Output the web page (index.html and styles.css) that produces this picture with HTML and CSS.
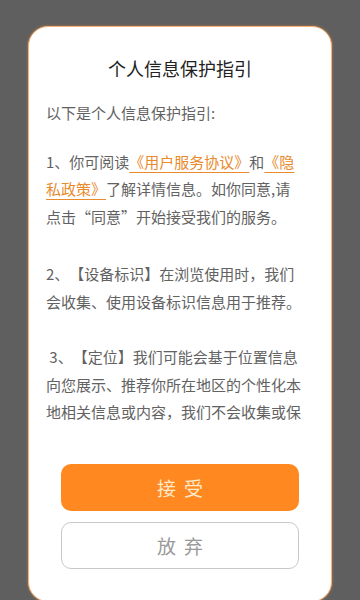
FILE: index.html
```html
<!DOCTYPE html>
<html lang="zh-CN">
<head>
    <meta charset="UTF-8">
    <meta name="viewport" content="width=device-width, initial-scale=1.0">
    <title>个人信息保护指引</title>
    <link rel="stylesheet" href="styles.css">
</head>
<body>
    <div class="dialog">
        <h1 class="dialog-title">个人信息保护指引</h1>

        <div class="dialog-content">
            <p class="intro">以下是个人信息保护指引:</p>
            <p>1、你可阅读<a href="#" class="link">《用户服务协议》</a>和<a href="#" class="link">《隐私政策》</a>了解详情信息。如你同意,请点击“同意”开始接受我们的服务。</p>
            <p class="device">2、【设备标识】在浏览使用时，我们会收集、使用设备标识信息用于推荐。</p>
            <p>&nbsp;3、【定位】我们可能会基于位置信息向您展示、推荐你所在地区的个性化本地相关信息或内容，我们不会收集或保存你的位置信息，你可以在系统设置中随时关闭定位权限。</p>
        </div>

        <div class="dialog-actions">
            <button class="btn btn-accept">接受</button>
            <button class="btn btn-reject">放弃</button>
        </div>
    </div>
</body>
</html>
```

FILE: styles.css
```css
* {
    margin: 0;
    padding: 0;
    box-sizing: border-box;
}

body {
    font-family: "Noto Sans CJK SC", "Noto Sans", sans-serif;
    background: #5f5f5f;
    height: 600px;
    overflow: hidden;
    display: flex;
    justify-content: center;
    padding-top: 26px;
}

.dialog {
    width: 304px;
    height: 576px;
    background: #fff;
    border: 1.5px solid #f2b27a;
    border-radius: 20px;
    box-shadow: 0 0 3px rgba(233, 140, 60, 0.6);
    display: flex;
    flex-direction: column;
    align-items: center;
}

.dialog-title {
    margin-top: 29px;
    font-size: 18px;
    line-height: 24px;
    font-weight: normal;
    color: #222;
}

.dialog-content {
    align-self: stretch;
    margin-top: 19px;
    padding: 0 28px 0 17px;
    height: 330px;
    overflow-y: auto;
    scrollbar-width: none;
    font-size: 15px;
    line-height: 27.5px;
    color: #626262;
    text-spacing-trim: space-all;
}

.dialog-content p {
    margin-bottom: 30px;
}

.dialog-content .intro {
    margin-bottom: 21px;
}

.dialog-content .device {
    margin-bottom: 28px;
}

.link {
    color: #e98a2c;
    text-decoration: underline;
    text-underline-offset: 4px;
}

.dialog-actions {
    margin-top: 35px;
    display: flex;
    flex-direction: column;
    gap: 11px;
}

.btn {
    width: 238px;
    height: 47px;
    border-radius: 10px;
    font-family: inherit;
    font-size: 19px;
    letter-spacing: 8px;
    padding-left: 8px;
    cursor: pointer;
}

.btn-accept {
    background: #ff8820;
    border: none;
    color: #feeacc;
}

.btn-reject {
    background: #fff;
    border: 1.5px solid #c9c9c9;
    color: #999;
}
```
